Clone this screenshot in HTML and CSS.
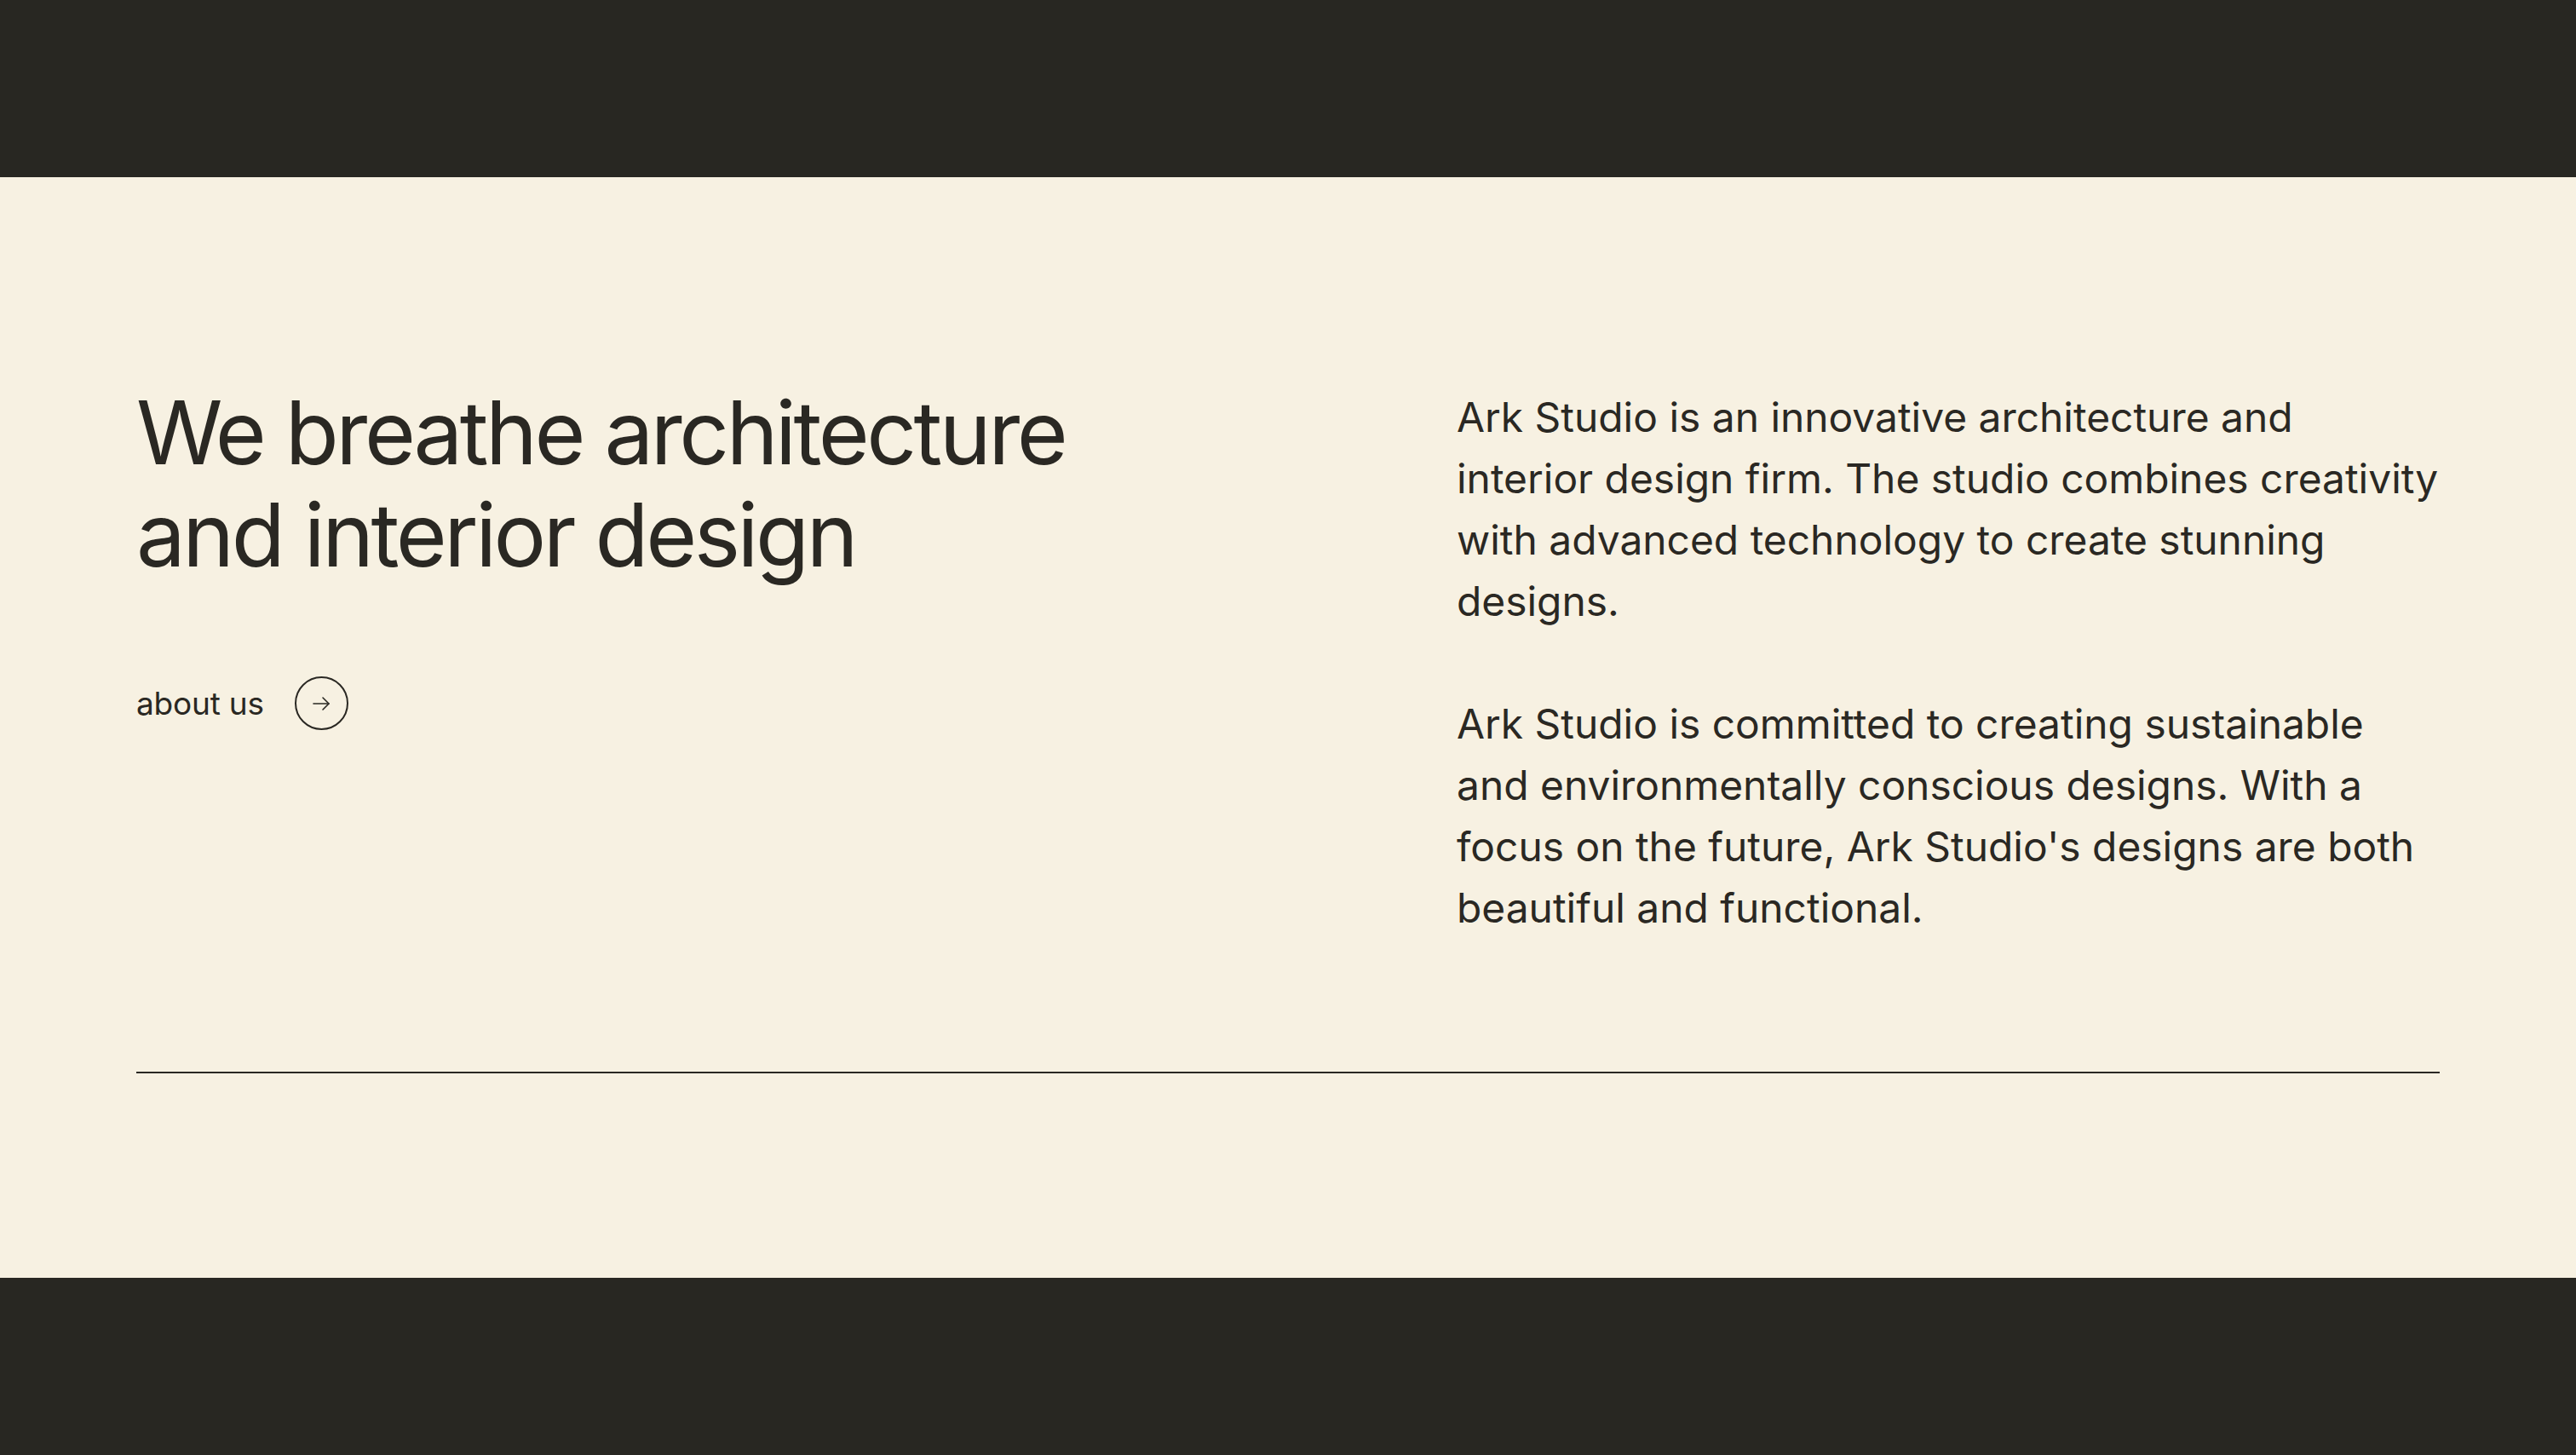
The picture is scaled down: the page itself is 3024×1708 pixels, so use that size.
FILE: index.html
```html
<!DOCTYPE html>
<html lang="en">
<head>
    <meta charset="UTF-8">
    <meta name="viewport" content="width=device-width, initial-scale=1.0">
    <title>Ark Studio</title>
    <link rel="stylesheet" href="styles.css">
</head>
<body>
    <div class="topbar"></div>

    <!-- About -->
    <section class="about">
        <div class="about-grid">
            <div class="about-intro">
                <h1>We breathe architecture and interior design</h1>
                <a href="#" class="about-link">
                    about us
                    <span class="circle-btn">
                        <svg width="22" height="22" viewBox="0 0 22 22" fill="none" stroke="currentColor" stroke-width="1.6" stroke-linecap="round" stroke-linejoin="round">
                            <path d="M2 11h18"/>
                            <path d="M13 4l7 7-7 7"/>
                        </svg>
                    </span>
                </a>
            </div>
            <div class="about-text">
                <p>Ark Studio is an innovative architecture and interior design firm. The studio combines creativity with advanced technology to create stunning designs.</p>
                <p>Ark Studio is committed to creating sustainable and environmentally conscious designs. With a focus on the future, Ark Studio's designs are both beautiful and functional.</p>
            </div>
        </div>
        <hr class="divider">
    </section>

    <div class="bottombar"></div>
</body>
</html>
```

FILE: styles.css
```css
/* Genel */
body {
    font-family: Inter, "Noto Sans", sans-serif;
    background-color: #282722;
    margin: 0;
    padding: 0;
    color: #2a2823;
}

.topbar {
    height: 208px;
    background-color: #282722;
}

.bottombar {
    height: 208px;
    background-color: #282722;
}

/* About bolumu */
.about {
    background-color: #f7f1e2;
    padding: 246px 160px 240px;
}

.about-grid {
    display: grid;
    grid-template-columns: 1154px 1154px;
    column-gap: 396px;
}

h1 {
    font-size: 103px;
    font-weight: 400;
    line-height: 120px;
    letter-spacing: -3.5px;
    margin: -6px 0 0;
    max-width: 1150px;
}

.about-link {
    display: inline-flex;
    align-items: center;
    gap: 36px;
    margin-top: 106px;
    font-size: 37px;
    letter-spacing: -0.2px;
    color: #2a2823;
    text-decoration: none;
}

.circle-btn {
    width: 59px;
    height: 59px;
    border: 2px solid #2a2823;
    border-radius: 50%;
    display: flex;
    align-items: center;
    justify-content: center;
}

.about-text p {
    font-size: 47.9px;
    line-height: 72px;
    margin: 0 0 72px;
}

.about-text p:last-child {
    margin-bottom: 0;
}

.divider {
    border: none;
    border-top: 2px solid #2a2823;
    margin: 156px 0 0;
}
```
